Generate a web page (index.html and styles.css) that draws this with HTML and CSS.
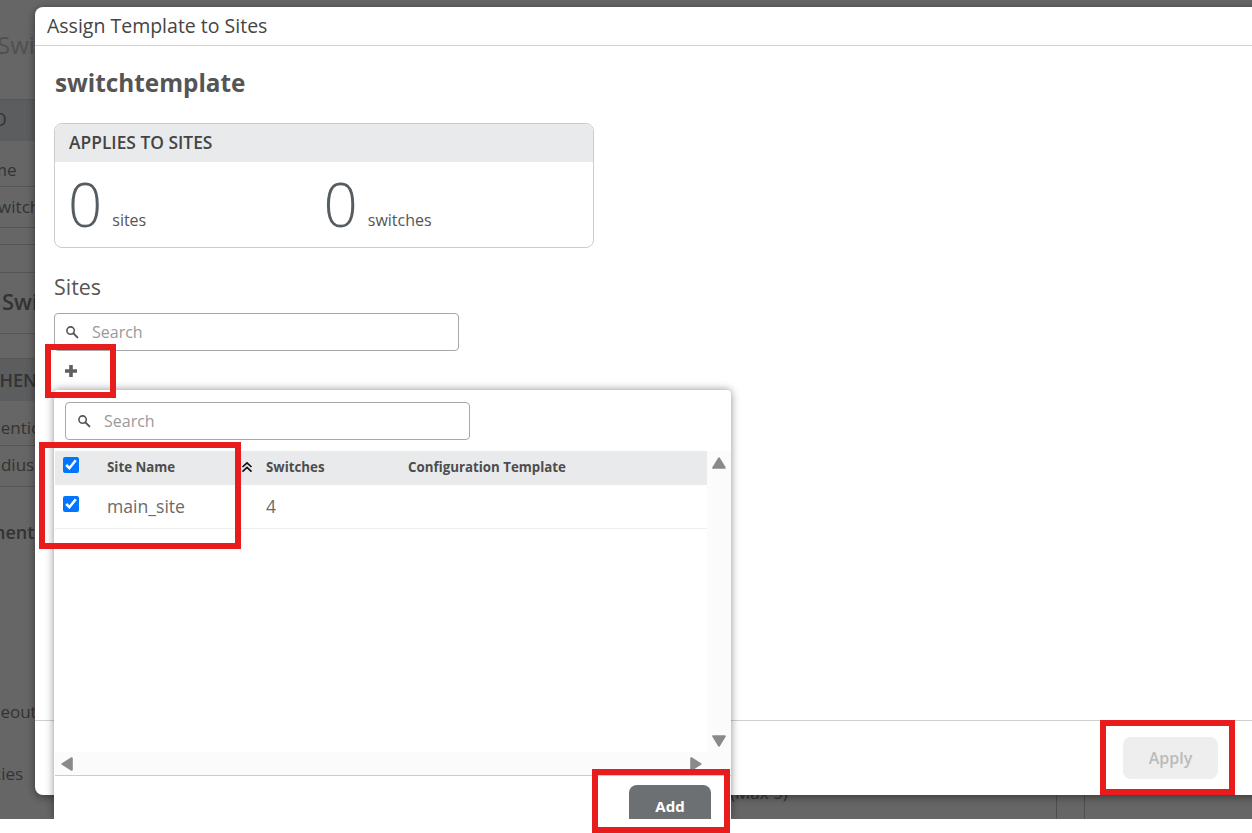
FILE: index.html
```html
<!DOCTYPE html>
<html lang="en">
<head>
<meta charset="utf-8">
<title>Assign Template to Sites</title>
<link rel="stylesheet" href="styles.css">
</head>
<body>
<div class="screen">
  <div class="backdrop">
    <div class="bg-row bg-title"><span class="cut-title">Switch Templates</span></div>
    <div class="bg-row bg-band bg-info"><span class="cut-info">INFO</span></div>
    <div class="bg-row bg-name"><span class="cut-name">Name</span></div>
    <div class="bg-row bg-value"><span class="cut-value">switchtemplate</span></div>
    <div class="bg-row bg-thin1"></div>
    <div class="bg-row bg-thin2"></div>
    <div class="bg-row bg-head"><span class="cut-head">Switch</span></div>
    <div class="bg-row bg-thin3"></div>
    <div class="bg-row bg-band bg-auth"><span class="cut-auth">AUTHEN</span></div>
    <div class="bg-row bg-authn"><span class="cut-authn">Authentication</span></div>
    <div class="bg-row bg-radius"><span class="cut-radius">Radius</span></div>
    <div class="bg-free bg-ment"><span class="cut-ment">Management</span></div>
    <div class="bg-free bg-timeout"><span class="cut-timeout">Timeout</span></div>
    <div class="bg-free bg-policies"><span class="cut-policies">Policies</span></div>
    <div class="bg-bottom">
      <span class="bg-max">(Max 5)</span>
      <span class="bg-col"></span>
      <span class="bg-col bg-col-last"></span>
    </div>
  </div>

  <div class="modal">
    <header class="modal-header">Assign Template to Sites</header>
    <main class="modal-body">
      <h1 class="template-name">switchtemplate</h1>
      <section class="card">
        <h2 class="card-head">APPLIES TO SITES</h2>
        <div class="card-stats">
          <div class="stat"><span class="stat-num">0</span><span class="stat-label">sites</span></div>
          <div class="stat"><span class="stat-num">0</span><span class="stat-label">switches</span></div>
        </div>
      </section>
      <h3 class="sites-title">Sites</h3>
      <div class="search search-main">
        <svg class="search-icon" viewBox="0 0 14 14" width="14" height="14"><circle cx="5.6" cy="5.6" r="3.7" fill="none" stroke="#555" stroke-width="1.6"/><path d="M8.4 8.4 L12.4 12.4" stroke="#555" stroke-width="2" stroke-linecap="round"/></svg>
        <span class="search-text">Search</span>
      </div>
      <div class="plus-row">
        <svg viewBox="0 0 14 14" width="14" height="14"><path d="M5.2 1 H8.8 V5.2 H13 V8.8 H8.8 V13 H5.2 V8.8 H1 V5.2 H5.2 Z" fill="#5f5f5f"/></svg>
      </div>
    </main>
    <footer class="modal-footer">
      <button class="btn-apply">Apply</button>
      <button class="btn-cancel">Cancel</button>
    </footer>
  </div>

  <div class="popup">
    <div class="search search-pop">
      <svg class="search-icon" viewBox="0 0 14 14" width="14" height="14"><circle cx="5.6" cy="5.6" r="3.7" fill="none" stroke="#555" stroke-width="1.6"/><path d="M8.4 8.4 L12.4 12.4" stroke="#555" stroke-width="2" stroke-linecap="round"/></svg>
      <span class="search-text">Search</span>
    </div>
    <div class="table-area">
      <div class="table-main">
        <div class="table-scroll">
          <div class="t-row t-head">
            <span class="t-check"><input type="checkbox" checked></span>
            <span class="t-name">Site Name
              <svg class="sort" viewBox="0 0 12 12" width="12" height="12"><path d="M1.5 6 L6 1.8 L10.5 6 M1.5 10.6 L6 6.4 L10.5 10.6" fill="none" stroke="#111" stroke-width="1.7"/></svg>
            </span>
            <span class="t-sw">Switches</span>
            <span class="t-cfg">Configuration Template</span>
          </div>
          <div class="t-row t-body">
            <span class="t-check"><input type="checkbox" checked></span>
            <span class="t-name">main_site</span>
            <span class="t-sw">4</span>
            <span class="t-cfg"></span>
          </div>
        </div>
        <div class="hbar">
          <svg viewBox="0 0 12 14" width="12" height="14"><path d="M10.8 1.2 V12.8 L1.4 7 Z" fill="#8a8a8a" stroke="#8a8a8a" stroke-width="2" stroke-linejoin="round"/></svg>
          <svg viewBox="0 0 12 14" width="12" height="14"><path d="M1.2 1.2 V12.8 L10.6 7 Z" fill="#8a8a8a" stroke="#8a8a8a" stroke-width="2" stroke-linejoin="round"/></svg>
        </div>
      </div>
      <div class="vbar">
        <svg viewBox="0 0 14 12" width="14" height="12"><path d="M1.2 10.8 H12.8 L7 1.4 Z" fill="#8a8a8a" stroke="#8a8a8a" stroke-width="2" stroke-linejoin="round"/></svg>
        <svg viewBox="0 0 14 12" width="14" height="12"><path d="M1.2 1.2 H12.8 L7 10.6 Z" fill="#8a8a8a" stroke="#8a8a8a" stroke-width="2" stroke-linejoin="round"/></svg>
      </div>
    </div>
    <div class="popup-footer"><button class="btn-add">Add</button></div>
  </div>

  <div class="mark mark-plus"></div>
  <div class="mark mark-table"></div>
  <div class="mark mark-add"></div>
  <div class="mark mark-apply"></div>
</div>
</body>
</html>
```
FILE: styles.css
```css
* { box-sizing: border-box; }
html, body { margin: 0; padding: 0; height: 100%; overflow: hidden; background: #fff; }
body { font-family: "Open Sans", "Liberation Sans", sans-serif; color: #555; }
button { font-family: inherit; border: 0; }

.screen { position: relative; width: 1252px; height: 833px; overflow: hidden; background: #fff; }

/* dimmed page behind the modal */
.backdrop { height: 819px; background: #666; color: #333; overflow: hidden; position: relative; white-space: nowrap; }
.bg-row { border-bottom: 1px solid #555; display: flex; align-items: center; overflow: hidden; }
.bg-band { background: #5c5d5e; border-bottom: 0; }
.bg-title { height: 100px; align-items: flex-start; }
.bg-info { height: 41px; padding-bottom: 4px; }
.bg-name { height: 46px; padding-top: 12px; }
.bg-value { height: 41px; padding-bottom: 2px; }
.bg-thin1 { height: 17px; }
.bg-thin2 { height: 28px; }
.bg-head { height: 61px; }
.bg-thin3 { height: 25px; }
.bg-auth { height: 42px; }
.bg-authn { height: 45px; padding-top: 8px; }
.bg-radius { height: 41px; }
.bg-free { height: 0; overflow: visible; display: block; }
.bg-free span { display: block; line-height: 24px; }

.cut-title { font-size: 24px; margin: 30px 0 0 -3px; color: #505050; line-height: 30px; }
.cut-info { font-size: 18px; font-weight: 400; margin-left: -35px; }
.cut-name { font-size: 17px; margin-left: -31px; }
.cut-value { font-size: 17px; margin-left: -10px; }
.cut-head { font-size: 22px; font-weight: 600; margin: -4px 0 0 2px; color: #333; }
.cut-auth { font-size: 18px; font-weight: 600; margin-left: -36px; }
.cut-authn { font-size: 17px; margin-left: -37px; }
.cut-radius { font-size: 17px; margin-left: -19px; margin-top: -3px; }
.bg-ment { margin-top: 33px; }
.cut-ment { font-size: 18px; font-weight: 600; margin-left: -81px; }
.bg-timeout { margin-top: 180px; }
.cut-timeout { font-size: 17px; margin-left: -29px; }
.bg-policies { margin-top: 62px; }
.cut-policies { font-size: 17px; margin-left: -36px; }

.bg-bottom { position: absolute; left: 0; right: 0; top: 780px; height: 39px; display: flex; }
.bg-max { margin-left: 730px; width: 326px; font-size: 17px; line-height: 26px; color: #333; }
.bg-col { width: 28px; border-left: 1px solid #4e4e4e; height: 39px; }
.bg-col-last { width: 100px; }

/* modal */
.modal { position: absolute; left: 35px; top: 7px; width: 1300px; height: 788px; background: #fff; border-radius: 8px; display: flex; flex-direction: column; box-shadow: 0 2px 8px rgba(0,0,0,.45); }
.modal-header { height: 39px; border-bottom: 1px solid #d0d0d0; padding: 6px 12px 0; font-size: 19.5px; line-height: 25px; font-weight: 500; color: #444; }
.modal-body { flex: 1; padding: 0 0 0 19px; min-height: 0; }
.template-name { margin: 20px 0 0 1px; font-size: 24.3px; line-height: 34px; font-weight: 700; color: #555; }
.card { margin-top: 23px; width: 540px; height: 125px; border: 1px solid #ccc; border-radius: 8px; overflow: hidden; }
.card-head { margin: 0; height: 38px; background: #e9eaec; padding: 0 14px; font-size: 17.4px; line-height: 37px; font-weight: 600; color: #444; }
.card-stats { display: flex; padding: 0 14px 0 13px; }
.stat { width: 256px; display: flex; align-items: baseline; }
.stat-num { font-size: 60px; line-height: 84px; font-weight: 300; color: #555d63; }
.stat-label { margin-left: 10px; font-size: 16px; color: #555; position: relative; top: -1px; }
.sites-title { margin: 24px 0 0; font-size: 21.4px; line-height: 30px; font-weight: 400; color: #555; }
.search { display: flex; align-items: center; height: 38px; border: 1px solid #a8a8a8; border-radius: 4px; background: #fff; }
.search-icon { margin-left: 11px; flex: none; }
.search-text { margin-left: 13px; font-size: 16px; color: #9a9a9a; }
.search-main { margin-top: 11px; width: 405px; }
.search-main .search-icon { margin-left: 10px; }
.plus-row { height: 40px; padding: 10px 0 0 10px; }
.modal-footer { height: 75px; border-top: 1px solid #d0d0d0; display: flex; justify-content: flex-end; align-items: flex-start; padding: 16px 3px 0 0; gap: 32px; }
.btn-apply { width: 95px; height: 42px; border-radius: 8px; background: #eee; color: #bbb; font-size: 16px; font-weight: 600; }
.btn-cancel { width: 82px; height: 42px; background: #fff; color: #bbb; font-size: 16px; font-weight: 600; }

/* add-sites popup */
.popup { position: absolute; left: 54px; top: 390px; width: 677px; height: 429px; background: #fff; border-radius: 4px 4px 0 0; box-shadow: 0 0 8px rgba(0,0,0,.45); display: flex; flex-direction: column; overflow: hidden; clip-path: inset(-10px -10px 0 -10px); }
.search-pop { flex: none; margin: 12px 0 0 11px; width: 405px; }
.table-area { flex: none; display: flex; margin: 11px 0 0 1px; height: 325px; border-bottom: 1px solid #ccc; }
.table-main { width: 652px; display: flex; flex-direction: column; }
.table-scroll { flex: 1; }
.t-row { display: grid; grid-template-columns: 52px 159px 142px 1fr; align-items: center; }
.t-head { height: 34px; background: #e9eaec; font-size: 13.3px; line-height: 16px; font-weight: 700; color: #4d4d4d; }
.t-body { height: 44px; border-bottom: 1px solid #eee; font-size: 17.6px; color: #6a6a6a; }
.t-sw, .t-cfg { padding-bottom: 2px; }
.t-check { display: flex; padding-left: 8px; }
.t-check input { margin: 0; width: 16px; height: 16px; }
.t-head .t-check { margin-top: -6px; }
.t-body .t-check { margin-top: -5px; }
.t-name { display: flex; align-items: center; justify-content: space-between; padding: 0 13px 2px 0; }
.hbar { height: 23px; background: #fbfbfb; display: flex; justify-content: space-between; align-items: center; padding: 0 5px 0 6px; }
.vbar { width: 24px; background: #fbfbfb; display: flex; flex-direction: column; justify-content: space-between; align-items: center; padding: 6px 0 28px; }
.popup-footer { flex: 1; display: flex; justify-content: flex-end; padding: 9px 20px 0 0; min-height: 0; }
.btn-add { flex: none; width: 82px; height: 42px; border-radius: 8px; background: #6c7073; color: #fff; font-size: 15px; font-weight: 700; padding: 0; }

/* red annotation boxes drawn over the screenshot */
.mark { position: absolute; border: 6px solid #e71d1d; }
.mark-plus { left: 45px; top: 344px; width: 71px; height: 54px; }
.mark-table { left: 39px; top: 442px; width: 202px; height: 107px; }
.mark-add { left: 592px; top: 769px; width: 138px; height: 64px; }
.mark-apply { left: 1100px; top: 720px; width: 135px; height: 75px; }
```
